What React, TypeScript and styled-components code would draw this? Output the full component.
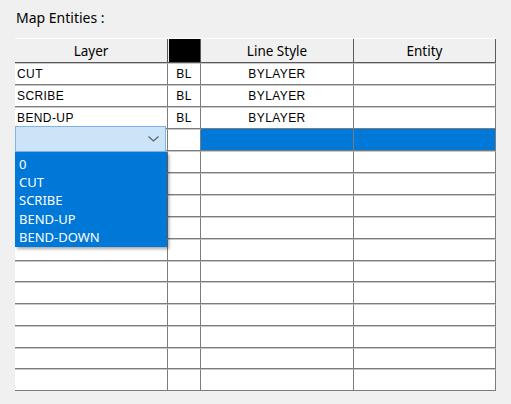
import styled, { createGlobalStyle } from "styled-components";

const GlobalStyle = createGlobalStyle`
  html, body {
    margin: 0;
    padding: 0;
    background: #f0f0f0;
  }
  body {
    width: 511px;
    height: 404px;
    overflow: hidden;
  }
`;

const Wrapper = styled.div`
  padding: 10px 15px 0 15px;
  font-family: "Noto Sans", "Liberation Sans", sans-serif;
`;

const Title = styled.div`
  font-size: 14px;
  line-height: 16px;
  color: #000;
  margin-bottom: 12px;
  padding-left: 1px;
`;

const Table = styled.div`
  position: relative;
  width: 481px;
`;

const cols = "153px 33px 153px 142px";

const HeaderRow = styled.div`
  display: grid;
  grid-template-columns: ${cols};
  height: 25px;
  box-sizing: border-box;
  border-top: 1px solid #ffffff;
  border-bottom: 1px solid #5a5a5a;
  background: #f0f0f0;
`;

const HeaderCell = styled.div`
  display: flex;
  align-items: center;
  justify-content: center;
  font-size: 13.5px;
  color: #000;
  border-right: 1px solid #5a5a5a;
`;

const ColorSwatch = styled.div`
  margin: 0 0 0 1px;
  height: 23px;
  width: 31px;
  background: #000;
`;

const Row = styled.div<{ $h: number }>`
  display: grid;
  grid-template-columns: ${cols};
  height: ${(p) => p.$h}px;
  box-sizing: border-box;
  border-bottom: 1px solid #7c7c7c;
  background: #fff;
`;

const Cell = styled.div<{ $center?: boolean; $selected?: boolean }>`
  display: flex;
  align-items: center;
  justify-content: ${(p) => (p.$center ? "center" : "flex-start")};
  padding-left: ${(p) => (p.$center ? "0" : "2px")};
  font-family: "Liberation Sans", Arial, sans-serif;
  font-size: 12px;
  letter-spacing: 0.4px;
  color: #000;
  background: ${(p) => (p.$selected ? "#0078d7" : "#fff")};
  border-right: 1px solid #7c7c7c;
  border-top: 1px solid ${(p) => (p.$selected ? "#0078d7" : "#c8c8c8")};
  overflow: hidden;
  white-space: nowrap;
`;

const Combo = styled.div`
  position: absolute;
  left: 0;
  top: 88px;
  width: 151px;
  height: 26px;
  box-sizing: border-box;
  background: #cce4f7;
  border: 1px solid #7eb4ea;
  display: flex;
  align-items: center;
  justify-content: flex-end;
  padding-right: 6px;
`;

const List = styled.div`
  position: absolute;
  left: 0;
  top: 114px;
  width: 152px;
  height: 95px;
  box-sizing: border-box;
  padding: 3px 0 0 4px;
  background: #0078d7;
  box-shadow: 2px 2px 3px rgba(0, 0, 0, 0.35);
`;

const ListItem = styled.div`
  font-family: "Noto Sans", sans-serif;
  font-size: 13px;
  line-height: 18.2px;
  color: #fff;
`;

const rows = [
  { layer: "CUT", color: "BL", style: "BYLAYER" },
  { layer: "SCRIBE", color: "BL", style: "BYLAYER" },
  { layer: "BEND-UP", color: "BL", style: "BYLAYER" },
  { layer: "", color: "", style: "", selected: true },
  ...Array.from({ length: 11 }, () => ({ layer: "", color: "", style: "" })),
];

const heights = [22, 22, 22, 22, 22, 22, 22, 22, 22, 21, 22, 22, 22, 21, 22];

const layers = ["0", "CUT", "SCRIBE", "BEND-UP", "BEND-DOWN"];

export default function App() {
  return (
    <>
      <GlobalStyle />
      <Wrapper>
        <Title>Map Entities :</Title>
        <Table>
          <HeaderRow>
            <HeaderCell>Layer</HeaderCell>
            <HeaderCell>
              <ColorSwatch />
            </HeaderCell>
            <HeaderCell>Line Style</HeaderCell>
            <HeaderCell>Entity</HeaderCell>
          </HeaderRow>
          {rows.map((r, i) => (
            <Row key={i} $h={heights[i]}>
              <Cell>{r.layer}</Cell>
              <Cell $center>{r.color}</Cell>
              <Cell $center $selected={r.selected}>
                {r.style}
              </Cell>
              <Cell $selected={r.selected} />
            </Row>
          ))}
          <Combo>
            <svg width="11" height="6" viewBox="0 0 11 6">
              <polyline points="0.5,0.5 5.5,5 10.5,0.5" fill="none" stroke="#606060" strokeWidth="1.2" />
            </svg>
          </Combo>
          <List>
            {layers.map((l) => (
              <ListItem key={l}>{l}</ListItem>
            ))}
          </List>
        </Table>
      </Wrapper>
    </>
  );
}
